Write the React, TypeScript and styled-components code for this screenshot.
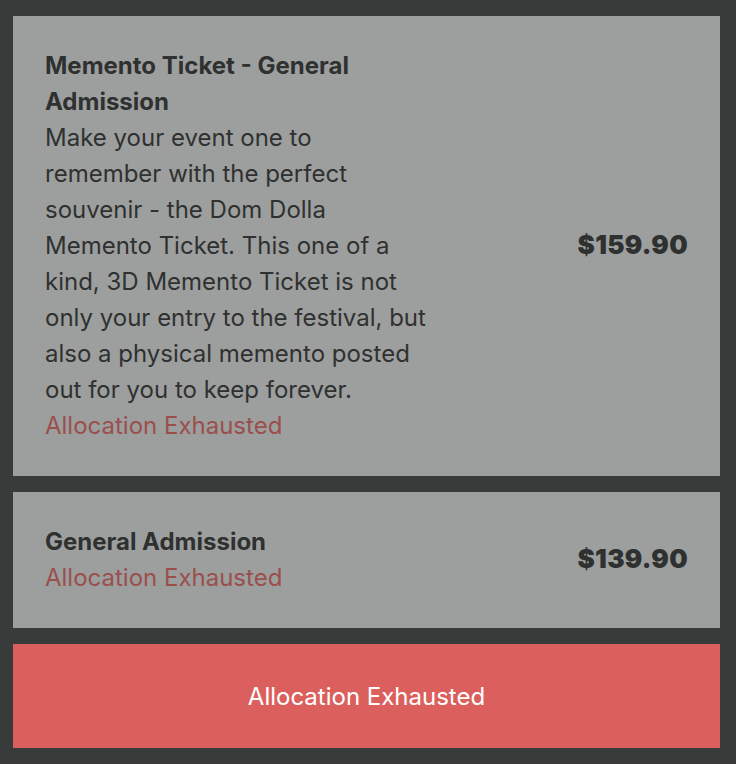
import React from "react";
import styled, { createGlobalStyle } from "styled-components";

const Global = createGlobalStyle`
  html, body { margin: 0; padding: 0; background: #393b3a; }
  body { font-family: Inter, "Noto Sans", sans-serif; }
`;

const Page = styled.div`
  display: flex;
  flex-direction: column;
  gap: 16px;
  padding: 16px 16px 16px 13px;
  background: #393b3a;
`;

const Card = styled.div`
  display: flex;
  align-items: center;
  justify-content: space-between;
  padding: 32px;
  background: #9d9f9e;
`;

const Info = styled.div`
  width: 60%;
  display: flex;
  flex-direction: column;
  font-size: 24px;
  line-height: 36px;
  color: #2f3130;
`;

const Title = styled.div`
  font-weight: 700;
`;

const Desc = styled.div`
  font-weight: 400;
`;

const Status = styled.div`
  color: #9a4f4e;
`;

const Price = styled.div`
  font-size: 26px;
  line-height: 36px;
  font-weight: 900;
  letter-spacing: 0.3px;
  color: #2f3130;
  margin-top: -2px;
`;

const ActionButton = styled.button`
  height: 104px;
  border: none;
  background: #db605d;
  color: #ffffff;
  font-family: Inter, "Noto Sans", sans-serif;
  font-size: 24px;
  font-weight: 400;
  cursor: pointer;
`;

const tickets = [
  {
    title: "Memento Ticket - General Admission",
    desc: "Make your event one to remember with the perfect souvenir - the Dom Dolla Memento Ticket. This one of a kind, 3D Memento Ticket is not only your entry to the festival, but also a physical memento posted out for you to keep forever.",
    price: "$159.90",
  },
  { title: "General Admission", desc: "", price: "$139.90" },
];

export default function App() {
  return (
    <>
      <Global />
      <Page>
        {tickets.map((t) => (
          <Card key={t.title}>
            <Info>
              <Title>{t.title}</Title>
              {t.desc && <Desc>{t.desc}</Desc>}
              <Status>Allocation Exhausted</Status>
            </Info>
            <Price>{t.price}</Price>
          </Card>
        ))}
        <ActionButton>Allocation Exhausted</ActionButton>
      </Page>
    </>
  );
}
